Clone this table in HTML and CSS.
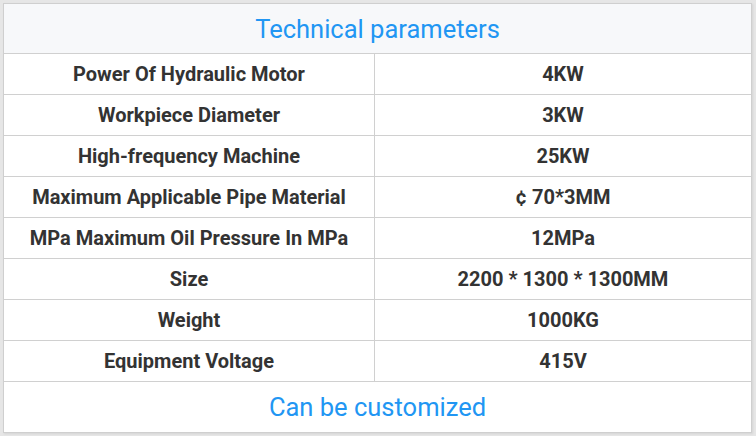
FILE: index.html
```html
<!DOCTYPE html>
<html>
<head>
<meta charset="utf-8">
<link rel="stylesheet" href="styles.css">
</head>
<body>
<div class="page">
  <div class="spec">
    <div class="title">Technical parameters</div>
    <div class="row"><div class="cell">Power Of Hydraulic Motor</div><div class="cell">4KW</div></div>
    <div class="row"><div class="cell">Workpiece Diameter</div><div class="cell">3KW</div></div>
    <div class="row"><div class="cell">High-frequency Machine</div><div class="cell">25KW</div></div>
    <div class="row"><div class="cell">Maximum Applicable Pipe Material</div><div class="cell">¢ 70*3MM</div></div>
    <div class="row"><div class="cell">MPa Maximum Oil Pressure In MPa</div><div class="cell">12MPa</div></div>
    <div class="row"><div class="cell">Size</div><div class="cell">2200 * 1300 * 1300MM</div></div>
    <div class="row"><div class="cell">Weight</div><div class="cell">1000KG</div></div>
    <div class="row"><div class="cell">Equipment Voltage</div><div class="cell">415V</div></div>
    <div class="foot">Can be customized</div>
  </div>
</div>
</body>
</html>
```
FILE: styles.css
```css
html, body {
  margin: 0;
  padding: 0;
}
body {
  background: #e6e6e6;
  width: 756px;
  height: 436px;
  overflow: hidden;
  font-family: Roboto, "Liberation Sans", sans-serif;
}
.page {
  padding: 3px 3px 0 3px;
}
.spec {
  width: 747px;
  background: #fff;
  border: 1px solid #cfcfcf;
  box-shadow: 1px 1px 2px rgba(0,0,0,0.08);
}
.title, .foot {
  height: 49px;
  display: flex;
  align-items: center;
  justify-content: center;
  color: #2196f3;
  font-size: 25.5px;
  font-weight: 400;
}
.title {
  background: #f7f8fa;
  border-bottom: 1px solid #d0d0d0;
}
.foot {
  height: 50px;
}
.row {
  display: grid;
  grid-template-columns: 371px 1fr;
  height: 40px;
  border-bottom: 1px solid #d0d0d0;
}
.cell {
  display: flex;
  align-items: center;
  justify-content: center;
  font-size: 20px;
  font-weight: 700;
  color: #333;
}
.cell:first-child {
  border-right: 1px solid #d0d0d0;
}
```
